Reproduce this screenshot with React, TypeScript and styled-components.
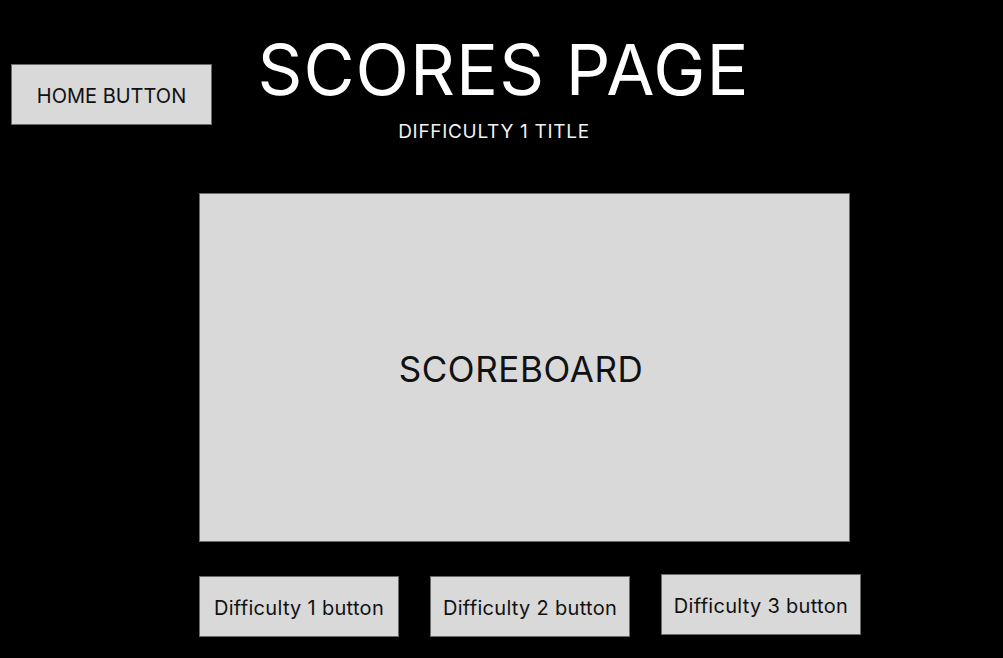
import React from "react";
import styled, { createGlobalStyle } from "styled-components";

const GlobalStyle = createGlobalStyle`
  html, body {
    margin: 0;
    padding: 0;
    background: #000;
  }
  body {
    font-family: Inter, "Noto Sans", "Liberation Sans", sans-serif;
  }
  * { box-sizing: border-box; }
`;

const Page = styled.div`
  width: 1003px;
  height: 658px;
  background: #000;
  display: flex;
  flex-direction: column;
  overflow: hidden;
`;

const Header = styled.header`
  display: flex;
  align-items: flex-start;
  height: 141px;
`;

const Box = styled.div`
  background: #d9d9d9;
  border: 1px solid #6a6a6a;
  color: #111;
  display: flex;
  align-items: center;
  justify-content: center;
  font-weight: 400;
`;

const HomeButton = styled(Box)`
  margin-top: 64px;
  margin-left: 11px;
  width: 201px;
  height: 61px;
  font-size: 20px;
  padding-top: 2px;
  cursor: pointer;
`;

const TitleBlock = styled.div`
  width: 582px;
  padding-top: 35px;
  display: flex;
  flex-direction: column;
  align-items: center;
`;

const Title = styled.h1`
  margin: 0 0 0 1px;
  color: #fff;
  font-size: 70px;
  line-height: 69px;
  font-weight: 400;
  letter-spacing: 1px;
`;

const Subtitle = styled.h2`
  margin: 18px 18px 0 0;
  color: #f2f2f2;
  font-size: 19px;
  line-height: 19px;
  font-weight: 400;
  letter-spacing: 0.7px;
`;

const Scoreboard = styled(Box)`
  margin-top: 52px;
  margin-left: 199px;
  width: 651px;
  height: 349px;
  font-size: 35px;
  letter-spacing: 0.6px;
  padding-right: 7px;
  padding-top: 2px;
`;

const ButtonRow = styled.div`
  display: flex;
  align-items: flex-start;
  gap: 31px;
  margin-top: 32px;
  margin-left: 199px;
`;

const DifficultyButton = styled(Box)<{ $drop: number }>`
  margin-top: ${(p) => p.$drop}px;
  width: 200px;
  height: 61px;
  font-size: 20px;
  letter-spacing: 0.3px;
  padding-top: 2px;
  cursor: pointer;
`;

export default function App() {
  return (
    <>
      <GlobalStyle />
      <Page>
        <Header>
          <HomeButton>HOME BUTTON</HomeButton>
          <TitleBlock>
            <Title>SCORES PAGE</Title>
            <Subtitle>DIFFICULTY 1 TITLE</Subtitle>
          </TitleBlock>
        </Header>
        <Scoreboard>SCOREBOARD</Scoreboard>
        <ButtonRow>
          <DifficultyButton $drop={2}>Difficulty 1 button</DifficultyButton>
          <DifficultyButton $drop={2}>Difficulty 2 button</DifficultyButton>
          <DifficultyButton $drop={0}>Difficulty 3 button</DifficultyButton>
        </ButtonRow>
      </Page>
    </>
  );
}
